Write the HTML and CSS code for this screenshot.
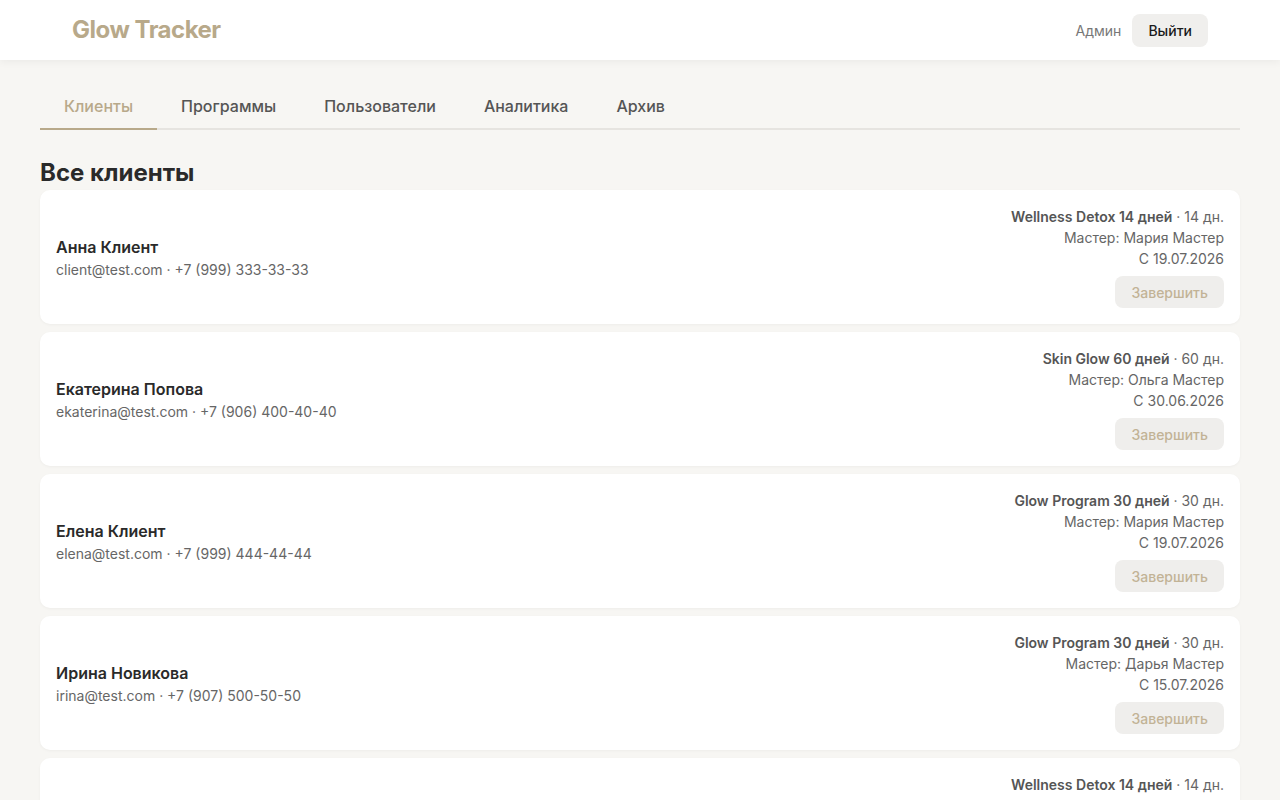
FILE: index.html
```html
<!DOCTYPE html>
<html lang="ru">
<head>
  <meta charset="UTF-8">
  <title>Glow Tracker</title>
  <link rel="stylesheet" href="styles.css">
</head>
<body>
  <header class="topbar">
    <div class="topbar-inner">
      <div class="logo">Glow Tracker</div>
      <div class="user">
        <span class="user-role">Админ</span>
        <button class="logout">Выйти</button>
      </div>
    </div>
  </header>

  <main class="container">
    <nav class="tabs">
      <button class="tab active">Клиенты</button>
      <button class="tab">Программы</button>
      <button class="tab">Пользователи</button>
      <button class="tab">Аналитика</button>
      <button class="tab">Архив</button>
    </nav>

    <h1 class="page-title">Все клиенты</h1>

    <div class="client-list">
      <div class="client-card">
        <div class="client-info">
          <div class="client-name">Анна Клиент</div>
          <div class="client-contact">client@test.com · +7 (999) 333-33-33</div>
        </div>
        <div class="client-program">
          <div><b>Wellness Detox 14 дней</b> · 14 дн.</div>
          <div>Мастер: Мария Мастер</div>
          <div>С 19.07.2026</div>
          <button class="finish">Завершить</button>
        </div>
      </div>

      <div class="client-card">
        <div class="client-info">
          <div class="client-name">Екатерина Попова</div>
          <div class="client-contact">ekaterina@test.com · +7 (906) 400-40-40</div>
        </div>
        <div class="client-program">
          <div><b>Skin Glow 60 дней</b> · 60 дн.</div>
          <div>Мастер: Ольга Мастер</div>
          <div>С 30.06.2026</div>
          <button class="finish">Завершить</button>
        </div>
      </div>

      <div class="client-card">
        <div class="client-info">
          <div class="client-name">Елена Клиент</div>
          <div class="client-contact">elena@test.com · +7 (999) 444-44-44</div>
        </div>
        <div class="client-program">
          <div><b>Glow Program 30 дней</b> · 30 дн.</div>
          <div>Мастер: Мария Мастер</div>
          <div>С 19.07.2026</div>
          <button class="finish">Завершить</button>
        </div>
      </div>

      <div class="client-card">
        <div class="client-info">
          <div class="client-name">Ирина Новикова</div>
          <div class="client-contact">irina@test.com · +7 (907) 500-50-50</div>
        </div>
        <div class="client-program">
          <div><b>Glow Program 30 дней</b> · 30 дн.</div>
          <div>Мастер: Дарья Мастер</div>
          <div>С 15.07.2026</div>
          <button class="finish">Завершить</button>
        </div>
      </div>

      <div class="client-card">
        <div class="client-info">
          <div class="client-name">Ольга Смирнова</div>
          <div class="client-contact">olga@test.com · +7 (908) 600-60-60</div>
        </div>
        <div class="client-program">
          <div><b>Wellness Detox 14 дней</b> · 14 дн.</div>
          <div>Мастер: Мария Мастер</div>
          <div>С 19.07.2026</div>
          <button class="finish">Завершить</button>
        </div>
      </div>
    </div>
  </main>
</body>
</html>
```

FILE: styles.css
```css
body {
  margin: 0;
  font-family: Inter, "Noto Sans", sans-serif;
  background-color: #f7f6f3;
  color: #2a2a2a;
}
button {
  font-family: inherit;
}
.topbar {
  background: #fff;
  height: 60px;
  box-shadow: 0 2px 8px rgba(0,0,0,0.05);
}
.topbar-inner {
  max-width: 1200px;
  margin: 0 auto;
  padding: 0 32px;
  height: 100%;
  box-sizing: border-box;
  display: flex;
  align-items: center;
  justify-content: space-between;
}
.logo {
  font-size: 24px;
  font-weight: 700;
  color: #b8a98a;
  letter-spacing: -0.5px;
  margin-top: -2px;
}
.user {
  display: flex;
  align-items: center;
  gap: 11px;
}
.user-role {
  font-size: 14px;
  color: #777;
}
.logout {
  background: #f0efed;
  border: none;
  border-radius: 8px;
  padding: 8px 16px;
  font-size: 14px;
  font-weight: 500;
  color: #1a1a1a;
  cursor: pointer;
}
.container {
  max-width: 1200px;
  margin: 0 auto;
  padding: 24px 0 40px;
}
.tabs {
  display: flex;
  border-bottom: 2px solid #e6e4e0;
}
.tab {
  background: none;
  border: none;
  border-bottom: 2px solid transparent;
  margin-bottom: -2px;
  padding: 12px 24px;
  font-size: 16px;
  font-weight: 500;
  color: #555;
  cursor: pointer;
}
.tab.active {
  color: #b8a98a;
  border-bottom-color: #b8a98a;
}
.page-title {
  font-size: 24px;
  font-weight: 700;
  margin: 28px 0 3px;
  color: #2a2a2a;
}
.client-list {
  display: flex;
  flex-direction: column;
  gap: 8px;
}
.client-card {
  background: #fff;
  border-radius: 10px;
  padding: 16px;
  display: flex;
  align-items: center;
  justify-content: space-between;
  box-shadow: 0 1px 3px rgba(0,0,0,0.04);
}
.client-name {
  font-size: 16px;
  font-weight: 600;
  color: #2a2a2a;
  margin-bottom: 4px;
}
.client-contact {
  font-size: 14px;
  color: #666;
}
.client-program {
  text-align: right;
  font-size: 14px;
  line-height: 21px;
  color: #666;
}
.client-program b {
  font-weight: 600;
  color: #555;
}
.finish {
  margin-top: 7px;
  background: #efeeec;
  border: none;
  border-radius: 8px;
  height: 32px;
  padding: 0 16px;
  font-size: 14px;
  font-weight: 500;
  color: #c2b396;
}
```
